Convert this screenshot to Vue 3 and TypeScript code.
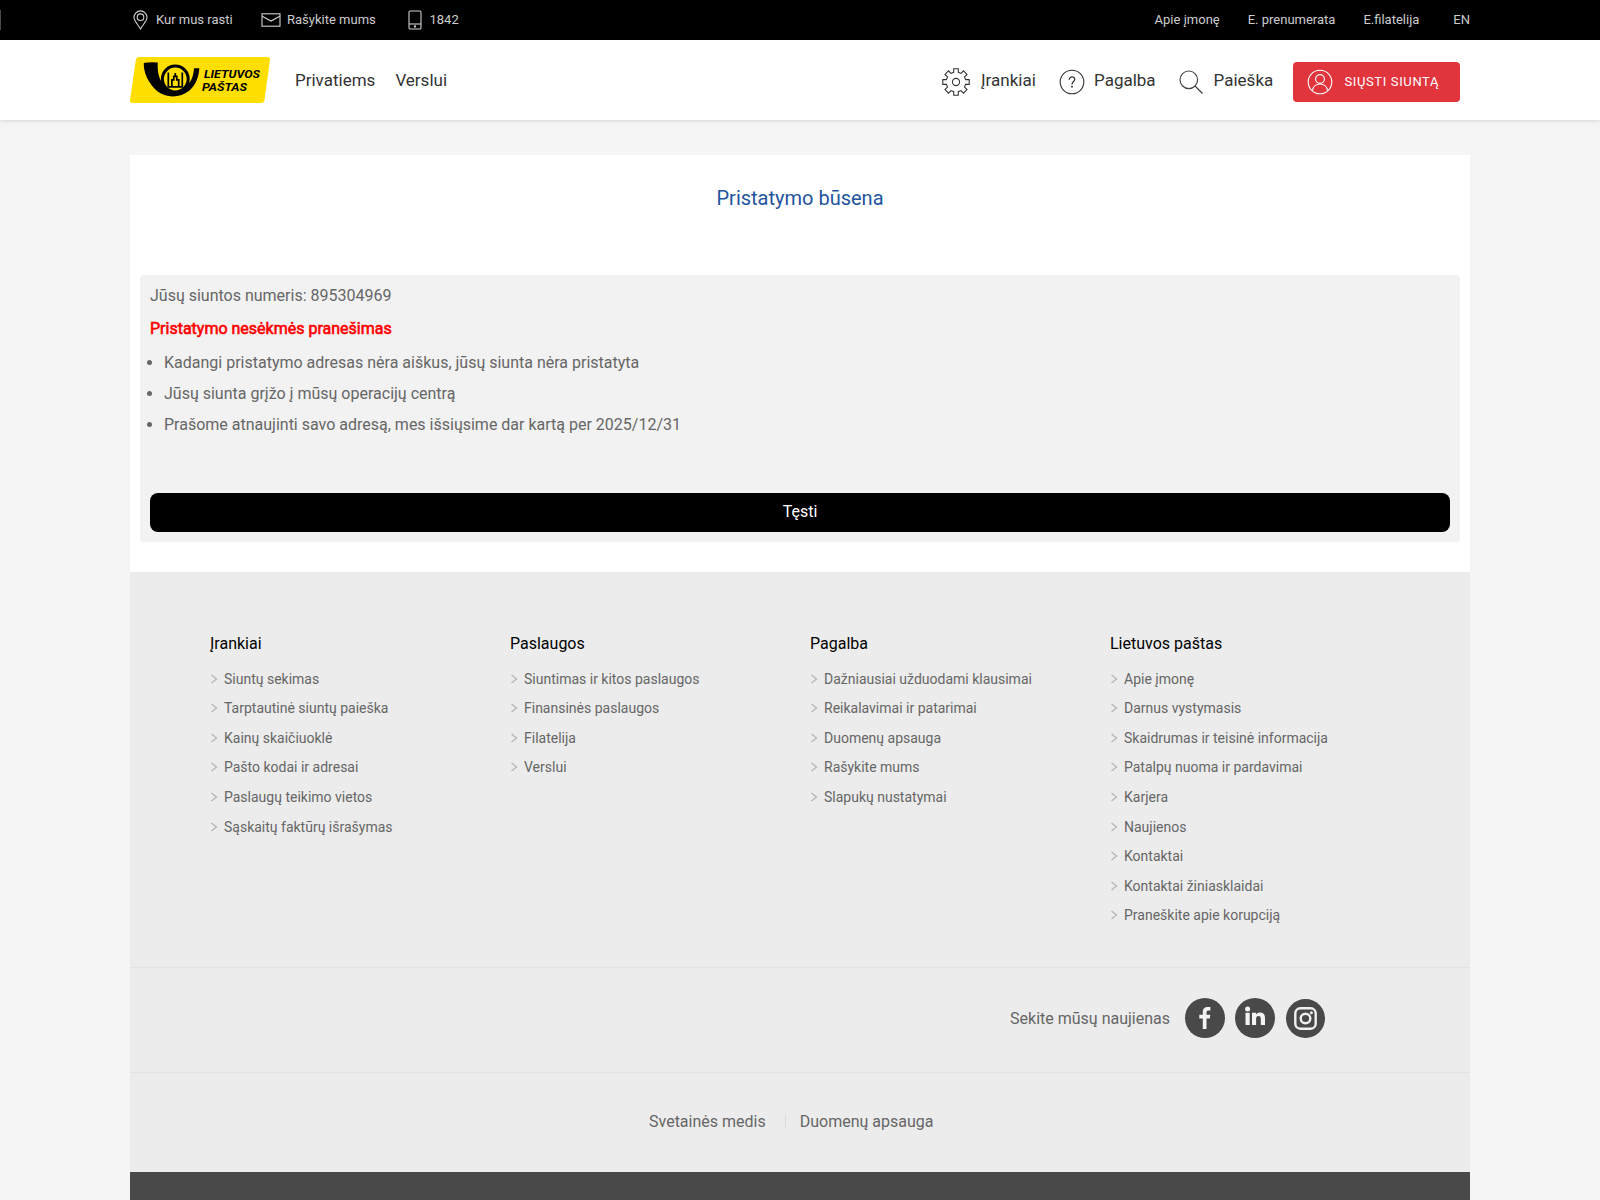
<script setup lang="ts">
interface FooterColumn {
  title: string
  links: string[]
}

const notices: string[] = [
  'Kadangi pristatymo adresas nėra aiškus, jūsų siunta nėra pristatyta',
  'Jūsų siunta grįžo į mūsų operacijų centrą',
  'Prašome atnaujinti savo adresą, mes išsiųsime dar kartą per 2025/12/31',
]

const columns: FooterColumn[] = [
  {
    title: 'Įrankiai',
    links: [
      'Siuntų sekimas',
      'Tarptautinė siuntų paieška',
      'Kainų skaičiuoklė',
      'Pašto kodai ir adresai',
      'Paslaugų teikimo vietos',
      'Sąskaitų faktūrų išrašymas',
    ],
  },
  {
    title: 'Paslaugos',
    links: ['Siuntimas ir kitos paslaugos', 'Finansinės paslaugos', 'Filatelija', 'Verslui'],
  },
  {
    title: 'Pagalba',
    links: [
      'Dažniausiai užduodami klausimai',
      'Reikalavimai ir patarimai',
      'Duomenų apsauga',
      'Rašykite mums',
      'Slapukų nustatymai',
    ],
  },
  {
    title: 'Lietuvos paštas',
    links: [
      'Apie įmonę',
      'Darnus vystymasis',
      'Skaidrumas ir teisinė informacija',
      'Patalpų nuoma ir pardavimai',
      'Karjera',
      'Naujienos',
      'Kontaktai',
      'Kontaktai žiniasklaidai',
      'Praneškite apie korupciją',
    ],
  },
]
</script>

<template>
  <div class="page">
    <div class="topbar">
      <span class="edge"></span>
      <div class="wrap topbar-row">
        <div class="top-left">
          <a class="top-item pin">
            <svg width="15" height="20" viewBox="0 0 15 20" fill="none" stroke="#d0d0d0" stroke-width="1.1">
              <path d="M7.5 19C5.2 14.8 1 11 1 7.3a6.5 6.4 0 0 1 13 0C14 11 9.8 14.800 7.500 19z" />
              <circle cx="7.500" cy="7.200" r="3.300" />
            </svg>
            <span>Kur mus rasti</span>
          </a>
          <a class="top-item mail">
            <svg width="20" height="14" viewBox="0 0 20 14" fill="none" stroke="#d0d0d0" stroke-width="1.1">
              <rect x="1" y=".8" width="18" height="12.400" />
              <path d="M1.200 3.200L10 8l8.800-4.800" />
            </svg>
            <span>Rašykite mums</span>
          </a>
          <a class="top-item phone">
            <svg width="14" height="20" viewBox="0 0 14 20" fill="none" stroke="#d0d0d0" stroke-width="1.1">
              <rect x="1" y="1" width="12" height="18" rx="1.300" />
              <path d="M1 14h12" />
              <circle cx="7" cy="16.500" r=".6" fill="#d0d0d0" />
            </svg>
            <span>1842</span>
          </a>
        </div>
        <div class="top-right">
          <a>Apie įmonę</a>
          <a>E. prenumerata</a>
          <a>E.filatelija</a>
          <a class="lang">EN</a>
        </div>
      </div>
    </div>

    <header class="header">
      <div class="wrap header-row">
        <svg class="logo" width="140" height="46" viewBox="0 0 140 46">
          <path d="M9.500 0H137.500Q140.300 0 140 2.800L134.500 43Q134 46 131 46H2.500Q-.3 46 0 43.200L5.800 3Q6.300 0 9.500 0z" fill="#ffde00" />
          <path
            d="M13.800 6Q18 4.800 27.800 5.400C27.300 14 28.500 21 33 26.800C39 33.500 51 34 57.500 28C62 23.500 63.500 18 64 11.300H69.300C69 19 66 28 59.500 33.500C50 41.500 35.500 41 27 34C18.500 26.500 13.300 15.500 13.800 6z"
            fill="#000"
          />
          <circle cx="45.300" cy="22" r="12.900" fill="#ffde00" stroke="#000" stroke-width="3" />
          <path
            d="M38.300 15.500v14.500M52.300 15.500v14.500M37.400 29.800H53.200M41.900 29.500V22.800h1.900v-3.500h3v3.500h1.900v6.700M45.300 19.500v-3.500"
            fill="none"
            stroke="#000"
            stroke-width="1.700"
          />
          <g font-family="Roboto, sans-serif" font-size="11.400" font-weight="700" font-style="italic" fill="#000">
            <text x="74" y="20.600" textLength="56" lengthAdjust="spacingAndGlyphs">LIETUVOS</text>
            <text x="72" y="34.200" textLength="45" lengthAdjust="spacingAndGlyphs">PAŠTAS</text>
          </g>
        </svg>
        <nav class="nav-main">
          <a>Privatiems</a>
          <a>Verslui</a>
        </nav>
        <nav class="nav-tools">
          <a class="tool tools">
            <svg width="28" height="28" viewBox="0 0 28 28" fill="none" stroke="#333" stroke-width="1.1">
              <path
                d="M11.700 .8h4.600v3.500l2.700 1.100 2.500-2.500 3.500 3.500-2.500 2.500 1.100 2.700h3.600v4.800h-3.600l-1.100 2.700 2.500 2.500-3.500 3.500-2.500-2.500-2.700 1.100v3.500h-4.600v-3.500l-2.700-1.100-2.500 2.500-3.500-3.500 2.500-2.500-1.100-2.700H.8v-4.800h3.600l1.100-2.700L3 6.400l3.500-3.500L9 5.400l2.700-1.100z"
              />
              <circle cx="14" cy="14" r="3.600" />
            </svg>
            <span>Įrankiai</span>
          </a>
          <a class="tool help">
            <svg width="26" height="26" viewBox="0 0 26 26" fill="none" stroke="#333" stroke-width="1.1">
              <circle cx="13" cy="13" r="11.800" />
              <path d="M10.200 10.800c0-3.900 5.700-3.600 5.500-.3-.1 2-2.700 2.300-2.700 4.900" stroke-width="1.300" />
              <circle cx="13" cy="17.700" r=".4" />
            </svg>
            <span>Pagalba</span>
          </a>
          <a class="tool search">
            <svg width="25" height="25" viewBox="0 0 25 25" fill="none" stroke="#444" stroke-width="1.200">
              <circle cx="9.800" cy="9.800" r="8.800" />
              <path d="M16 16l7.500 7.500" />
            </svg>
            <span>Paieška</span>
          </a>
          <a class="send">
            <svg width="26" height="26" viewBox="0 0 26 26" fill="none" stroke="#fff" stroke-width="1.100">
              <circle cx="13" cy="13" r="11.800" />
              <circle cx="13" cy="10" r="4.400" />
              <path d="M5.500 21.800c.9-9 14.100-9 15 0" />
            </svg>
            <span>SIŲSTI SIUNTĄ</span>
          </a>
        </nav>
      </div>
    </header>

    <main class="wrap main">
      <h1>Pristatymo būsena</h1>
      <section class="panel">
        <p class="number">Jūsų siuntos numeris: 895304969</p>
        <p class="alert">Pristatymo nesėkmės pranešimas</p>
        <ul>
          <li v-for="n in notices" :key="n">{{ n }}</li>
        </ul>
        <button type="button">Tęsti</button>
      </section>
    </main>

    <footer class="wrap footer">
      <div class="columns">
        <div v-for="c in columns" :key="c.title" class="column">
          <h2>{{ c.title }}</h2>
          <a v-for="l in c.links" :key="l">
            <svg width="14" height="10" viewBox="0 0 14 10" fill="none" stroke="#b5b5b5" stroke-width="1.300">
              <path d="M1.500 1l5 4-5 4" />
            </svg>
            <span>{{ l }}</span>
          </a>
        </div>
      </div>
      <div class="social">
        <span>Sekite mūsų naujienas</span>
        <svg class="fb" width="40" height="40" viewBox="0 0 40 40">
          <circle cx="20" cy="20" r="20" fill="#494949" />
          <path d="M17.800 31v-10.600h-3.500v-3.700h3.500v-2.800c0-3.500 2-5 4.800-5 1.400 0 2.400.1 2.800.2v3.400h-2c-1.500 0-1.900.8-1.900 1.900v2.300h3.800l-.5 3.700h-3.300V31z" fill="#f4f4f4" />
        </svg>
        <svg class="li" width="40" height="40" viewBox="0 0 40 40">
          <circle cx="20" cy="20" r="20" fill="#494949" />
          <circle cx="12.600" cy="10.900" r="2.500" fill="#f4f4f4" />
          <path d="M10.500 14.800h4.200V27h-4.200zM17 14.800h4v1.700c.7-1.200 2-2 4-2 4 0 5 2.600 5 6V27h-4.200v-5.900c0-1.500-.1-3.200-2.200-3.200s-2.500 1.500-2.500 3.100V27H17z" fill="#f4f4f4" />
        </svg>
        <svg class="ig" width="39" height="39" viewBox="0 0 39 39" fill="none" stroke="#f0f0f0" stroke-width="2.400">
          <circle cx="19.500" cy="19.500" r="19.500" fill="#494949" stroke="none" />
          <rect x="9.300" y="9.300" width="20.400" height="20.400" rx="5" />
          <circle cx="19.500" cy="19.500" r="4.800" />
          <circle cx="25.400" cy="13.700" r="1.500" fill="#f0f0f0" stroke="none" />
        </svg>
      </div>
      <div class="legal">
        <a>Svetainės medis</a>
        <span class="sep"></span>
        <a>Duomenų apsauga</a>
      </div>
      <div class="bottom"></div>
    </footer>
  </div>
</template>

<style>
body {
  margin: 0;
  background: #f5f5f5;
}
</style>

<style scoped>
.page {
  height: 1200px;
  overflow: hidden;
  background: #f5f5f5;
  font-family: Roboto, sans-serif;
  font-size: 16px;
  color: #666;
}
.wrap {
  width: 1340px;
  margin: 0 auto;
}
.topbar {
  position: relative;
  height: 40px;
  background: #000;
  color: #ccc;
  font-size: 13px;
}
.edge {
  position: absolute;
  left: 0;
  top: 10px;
  width: 1px;
  height: 20px;
  background: #4a4a4a;
}
.topbar-row,
.top-left,
.top-right,
.top-item,
.header-row,
.nav-main,
.nav-tools,
.tool,
.send {
  display: flex;
  align-items: center;
}
.topbar-row {
  height: 40px;
  justify-content: space-between;
}
.top-item span {
  padding-bottom: 2px;
  white-space: nowrap;
}
.pin {
  width: 128px;
  padding-left: 3px;
  gap: 8px;
}
.pin svg,
.mail svg,
.phone svg {
  display: block;
}
.mail {
  width: 146.5px;
  gap: 6px;
}
.phone {
  gap: 8px;
}
.top-right {
  gap: 28px;
  padding-bottom: 2px;
}
.top-right .lang {
  margin-left: 6px;
}
.header {
  position: relative;
  height: 80px;
  background: #fff;
  box-shadow: 0 1px 4px rgba(0, 0, 0, 0.13);
}
.header-row {
  height: 80px;
}
.logo {
  margin-right: 25px;
}
.nav-main {
  gap: 20px;
  font-size: 17px;
  color: #333;
}
.nav-tools {
  margin-left: auto;
  margin-right: 10px;
  font-size: 17px;
  color: #333;
}
.tool svg {
  position: relative;
  top: 2px;
}
.tools {
  width: 117px;
  gap: 11px;
}
.help {
  width: 120px;
  gap: 9px;
}
.search {
  width: 114px;
  gap: 9.6px;
}
.send {
  box-sizing: border-box;
  position: relative;
  top: 2px;
  width: 167px;
  height: 40px;
  padding-left: 14px;
  gap: 11.4px;
  border-radius: 4px;
  background: #e1343d;
  color: #fff;
  font-size: 13px;
  letter-spacing: 0.64px;
  white-space: nowrap;
}
.send span {
  padding-bottom: 2px;
}
.main {
  box-sizing: border-box;
  height: 417px;
  margin-top: 35px;
  padding: 28px 10px 0;
  background: #fff;
}
h1 {
  margin: 0 0 62px;
  color: #2354a0;
  font-size: 20px;
  font-weight: 400;
  line-height: 30px;
  text-align: center;
}
.panel {
  box-sizing: border-box;
  height: 267px;
  padding: 9px 10px 0;
  border-radius: 4px;
  background: #f2f2f2;
}
.number,
.alert {
  margin: 0;
  line-height: 24px;
}
.alert {
  margin-top: 9px;
  color: #f00;
  -webkit-text-stroke: 0.6px #f00;
}
ul {
  margin: 6px 0 53px;
  padding: 0 0 0 14px;
  line-height: 31px;
}
button {
  display: block;
  width: 100%;
  height: 39px;
  padding: 0 0 2px;
  border: 0;
  border-radius: 8px;
  background: #000;
  color: #fff;
  font: 16px Roboto, sans-serif;
}
.footer {
  background: #ececec;
}
.columns {
  box-sizing: border-box;
  display: flex;
  height: 396px;
  padding: 60px 0 0 80px;
  border-bottom: 1px solid #e2e2e2;
}
.column {
  width: 300px;
}
h2 {
  margin: 0 0 8.05px;
  color: #000;
  font-size: 16px;
  font-weight: 400;
  line-height: 24px;
}
.column a {
  display: flex;
  align-items: center;
  height: 29.55px;
  font-size: 14px;
}
.social {
  box-sizing: border-box;
  display: flex;
  align-items: center;
  justify-content: flex-end;
  height: 105px;
  padding: 0 145px 4px 0;
  border-bottom: 1px solid #e2e2e2;
}
.fb {
  margin-left: 15px;
}
.li {
  margin: 0 11px 0 10px;
}
.ig {
  margin-top: 1px;
}
.legal {
  display: flex;
  align-items: center;
  height: 99px;
  padding-left: 519px;
}
.legal a {
  position: relative;
  top: -1px;
}
.sep {
  width: 1px;
  height: 14px;
  margin: 0 14px 3px 19px;
  background: #dcdcdc;
}
.bottom {
  height: 28px;
  background: #494949;
}
</style>
